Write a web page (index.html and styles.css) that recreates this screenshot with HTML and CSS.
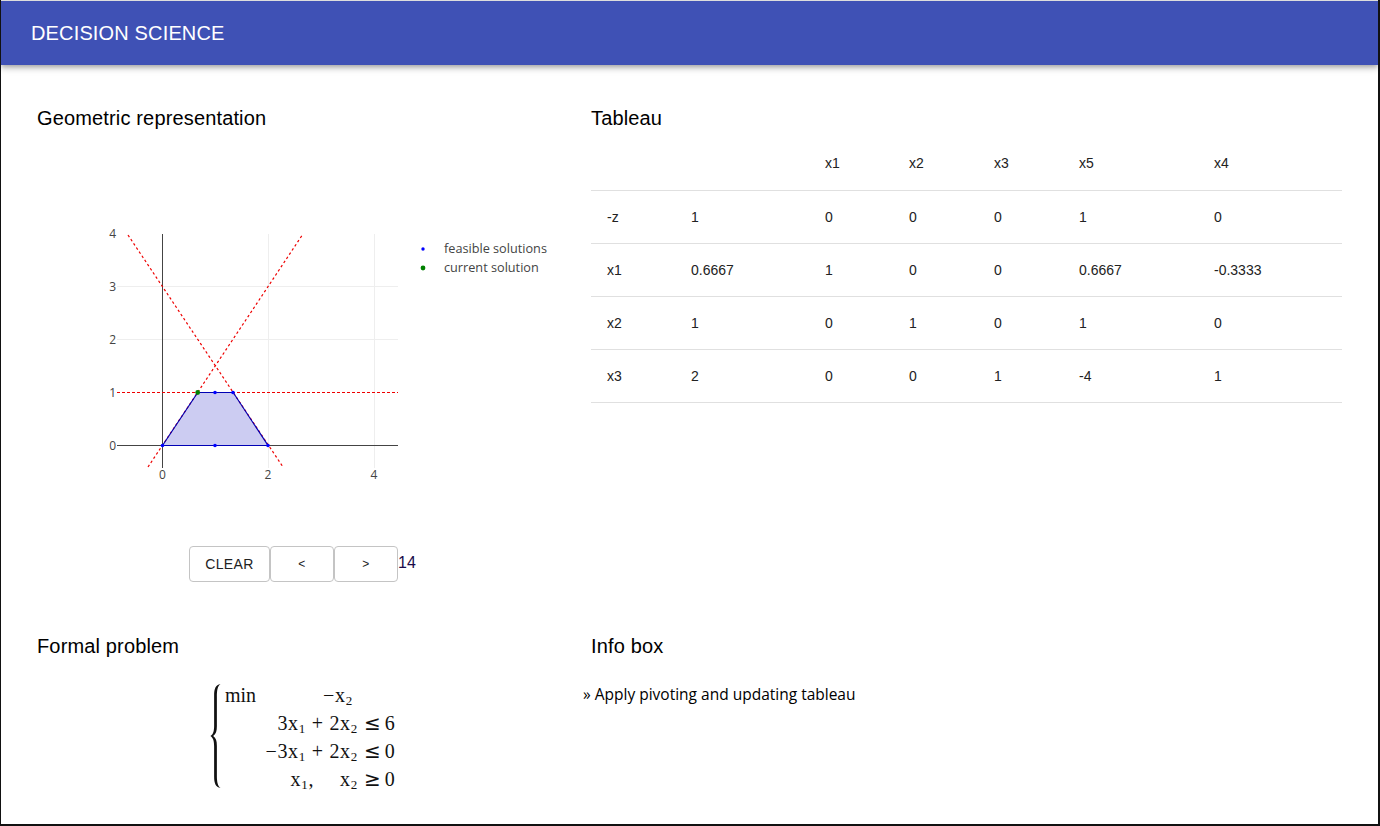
FILE: index.html
```html
<!DOCTYPE html>
<html lang="en">
<head>
  <meta charset="UTF-8" />
  <meta name="viewport" content="width=device-width, initial-scale=1.0" />
  <title>Decision Science</title>
  <link rel="stylesheet" href="styles.css">
</head>
<body>
  <div class="window">
    <header class="app-bar">DECISION SCIENCE</header>

    <main class="panels">
      <section class="panel panel-plot">
        <h2>Geometric representation</h2>
        <div class="plot">
          <svg width="470" height="270" viewBox="0 0 470 270">
            <!-- origin of the svg is page x=100, y=220 -->
            <g class="grid">
              <line x1="168.5" y1="13" x2="168.5" y2="247" />
              <line x1="274.5" y1="13" x2="274.5" y2="247" />
              <line x1="17" y1="118.5" x2="298" y2="118.5" />
              <line x1="17" y1="65.5" x2="298" y2="65.5" />
            </g>
            <g class="axis">
              <line x1="62.5" y1="13" x2="62.5" y2="247" />
              <line x1="17" y1="224.5" x2="298" y2="224.5" />
            </g>
            <g class="limits">
              <line x1="17" y1="171.5" x2="298" y2="171.5" />
              <line class="slant" x1="48" y1="246" x2="203" y2="13" />
              <line class="slant" x1="28" y1="14" x2="183" y2="246" />
            </g>
            <polygon class="feasible" points="62.5,224.5 97.7,171.5 133.2,171.5 168,224.5" />
            <g class="dots">
              <circle cx="62.5" cy="224.5" r="1.8" />
              <circle cx="115" cy="224.5" r="1.8" />
              <circle cx="168" cy="224.5" r="1.8" />
              <circle cx="115" cy="171.5" r="1.8" />
              <circle cx="133" cy="171.5" r="1.8" />
            </g>
            <circle class="current" cx="97.7" cy="171.5" r="2.4" />
            <g class="ticks">
              <text x="16" y="17" text-anchor="end">4</text>
              <text x="16" y="70" text-anchor="end">3</text>
              <text x="16" y="123" text-anchor="end">2</text>
              <text x="16" y="176" text-anchor="end">1</text>
              <text x="16" y="229" text-anchor="end">0</text>
              <text x="62.5" y="258" text-anchor="middle">0</text>
              <text x="168" y="258" text-anchor="middle">2</text>
              <text x="274" y="258" text-anchor="middle">4</text>
            </g>
            <g class="legend">
              <circle cx="323" cy="28" r="1.7" fill="#0000ff" />
              <text x="344" y="32">feasible solutions</text>
              <circle cx="323" cy="47" r="2.4" fill="#008000" />
              <text x="344" y="51">current solution</text>
            </g>
          </svg>
        </div>
        <div class="controls">
          <button class="btn btn-clear">CLEAR</button>
          <button class="btn btn-arrow">&lt;</button>
          <button class="btn btn-arrow">&gt;</button>
          <span class="step">14</span>
        </div>
      </section>

      <section class="panel panel-table">
        <h2>Tableau</h2>
        <table class="tableau">
          <colgroup>
            <col class="c1"><col class="c2"><col class="c3"><col class="c4"><col class="c5"><col class="c6"><col class="c7">
          </colgroup>
          <thead>
            <tr><th></th><th></th><th>x1</th><th>x2</th><th>x3</th><th>x5</th><th>x4</th></tr>
          </thead>
          <tbody>
            <tr><td>-z</td><td>1</td><td>0</td><td>0</td><td>0</td><td>1</td><td>0</td></tr>
            <tr><td>x1</td><td>0.6667</td><td>1</td><td>0</td><td>0</td><td>0.6667</td><td>-0.3333</td></tr>
            <tr><td>x2</td><td>1</td><td>0</td><td>1</td><td>0</td><td>1</td><td>0</td></tr>
            <tr><td>x3</td><td>2</td><td>0</td><td>0</td><td>1</td><td>-4</td><td>1</td></tr>
          </tbody>
        </table>
      </section>

      <section class="panel panel-formal">
        <h2>Formal problem</h2>
        <div class="formula">
          <svg class="brace" width="11" height="106" viewBox="0 0 12 110" preserveAspectRatio="none">
            <path d="M11.5 1 C6 2 4.5 6 4.5 13 L4.5 44 C4.5 50 3.5 53 .5 55 C3.5 57 4.5 60 4.5 66 L4.5 97 C4.5 104 6 108 11.5 109 C8.5 107 7.5 103 7.5 96 L7.5 65 C7.5 60 6.5 57 3.5 55 C6.5 53 7.5 50 7.5 45 L7.5 14 C7.5 7 8.5 3 11.5 1 Z" />
          </svg>
          <div class="system">
            <span class="kw">min</span>
            <span class="expr expr-goal">&minus;x<sub>2</sub></span>
            <span></span>
            <span></span>
            <span class="expr">3x<sub>1</sub> + 2x<sub>2</sub></span>
            <span class="rhs"><span class="op">&le;</span>6</span>
            <span></span>
            <span class="expr">&minus;3x<sub>1</sub> + 2x<sub>2</sub></span>
            <span class="rhs"><span class="op">&le;</span>0</span>
            <span></span>
            <span class="expr">x<sub>1</sub>,<span class="gap"></span>x<sub>2</sub></span>
            <span class="rhs"><span class="op">&ge;</span>0</span>
          </div>
        </div>
      </section>

      <section class="panel panel-info">
        <h2>Info box</h2>
        <p class="info-line">&raquo; Apply pivoting and updating tableau</p>
      </section>
    </main>
  </div>
</body>
</html>
```

FILE: styles.css
```css
* {
  box-sizing: border-box;
}
html, body {
  margin: 0;
  height: 100%;
}
body {
  background: #111;
  font-family: "Liberation Sans", Arial, sans-serif;
  color: #000;
}
.window {
  height: 824px;
  margin-right: 2px;
  margin-left: 1px;
  background: #fff;
  border-top: 1px solid #ddd;
  overflow: hidden;
}
.app-bar {
  height: 64px;
  padding: 0 30px;
  display: flex;
  align-items: center;
  background: #3f51b5;
  color: #fff;
  font-size: 20px;
  letter-spacing: .15px;
  box-shadow: 0 2px 4px -1px rgba(0,0,0,.2), 0 4px 5px 0 rgba(0,0,0,.14), 0 1px 10px 0 rgba(0,0,0,.12);
}
.panels {
  display: grid;
  grid-template-columns: 554px 751px;
  grid-template-rows: 528px auto;
  padding: 41px 0 0 36px;
}
h2 {
  margin: 0;
  font-size: 20px;
  font-weight: 400;
  line-height: 24px;
  letter-spacing: .15px;
}
.plot {
  margin: 91px 0 0 63px;
  height: 270px;
}
.plot svg {
  display: block;
}
.grid line {
  stroke: #eee;
  stroke-width: 1;
}
.axis line {
  stroke: #444;
  stroke-width: 1;
}
.feasible {
  fill: rgba(0, 0, 190, .2);
  stroke: #0000b4;
  stroke-width: 1.2;
}
.limits line {
  stroke: #ee0000;
  stroke-width: 1;
  stroke-dasharray: 3 2;
}
.limits .slant {
  stroke-width: 1.2;
  stroke-dasharray: 2.5 2.5;
}
.dots circle {
  fill: #0000ff;
}
.current {
  fill: #008000;
}
.ticks text {
  font-family: "Open Sans", sans-serif;
  font-size: 12px;
  fill: #444;
}
.legend text {
  font-family: "Open Sans", sans-serif;
  font-size: 12.7px;
  fill: #444;
}
.controls {
  display: flex;
  align-items: flex-start;
  margin: 55px 0 0 152px;
}
.btn {
  width: 64px;
  height: 36px;
  padding: 0;
  background: #fff;
  border: 1px solid #c4c4c4;
  border-radius: 4px;
  font-family: inherit;
  font-size: 14px;
  letter-spacing: .4px;
  color: #222;
}
.btn-clear {
  width: 81px;
}
.btn-arrow {
  font-size: 12px;
}
.step {
  font-size: 16px;
  line-height: 34px;
  color: #1a0a4a;
}
.tableau {
  width: 751px;
  margin-top: 6px;
  table-layout: fixed;
  border-collapse: collapse;
  font-size: 14px;
  color: #222;
}
.c1 { width: 84px; }
.c2 { width: 134px; }
.c3 { width: 84px; }
.c4 { width: 85px; }
.c5 { width: 85px; }
.c6 { width: 135px; }
.c7 { width: 144px; }
.tableau th, .tableau td {
  height: 53px;
  padding: 0 0 0 16px;
  text-align: left;
  font-weight: 400;
  border-bottom: 1px solid #e0e0e0;
}
.tableau th {
  height: 54px;
}
.formula {
  display: flex;
  align-items: flex-start;
  margin: 23px 0 0 174px;
  font-family: "Liberation Serif", "Times New Roman", serif;
  font-size: 20px;
  color: #111;
}
.brace {
  flex: none;
  margin: 2px 4px 0 -1px;
}
.brace path {
  fill: #111;
}
.system {
  display: grid;
  grid-template-columns: 40px 93px 40px;
  grid-auto-rows: 28px;
  align-items: center;
}
.expr {
  text-align: right;
  white-space: nowrap;
  letter-spacing: .7px;
}
.expr-goal {
  padding-right: 5px;
}
.gap {
  display: inline-block;
  width: 26px;
}
.rhs {
  padding-left: 6px;
  white-space: nowrap;
}
.op {
  margin-right: 4px;
  font-family: "DejaVu Sans", sans-serif;
  font-size: 20px;
}
sub {
  font-size: 13px;
  line-height: 0;
  vertical-align: -3px;
}
.info-line {
  margin: 25px 0 0 -8px;
  font-family: "Open Sans", sans-serif;
  font-size: 15.5px;
  line-height: 22px;
}
```
